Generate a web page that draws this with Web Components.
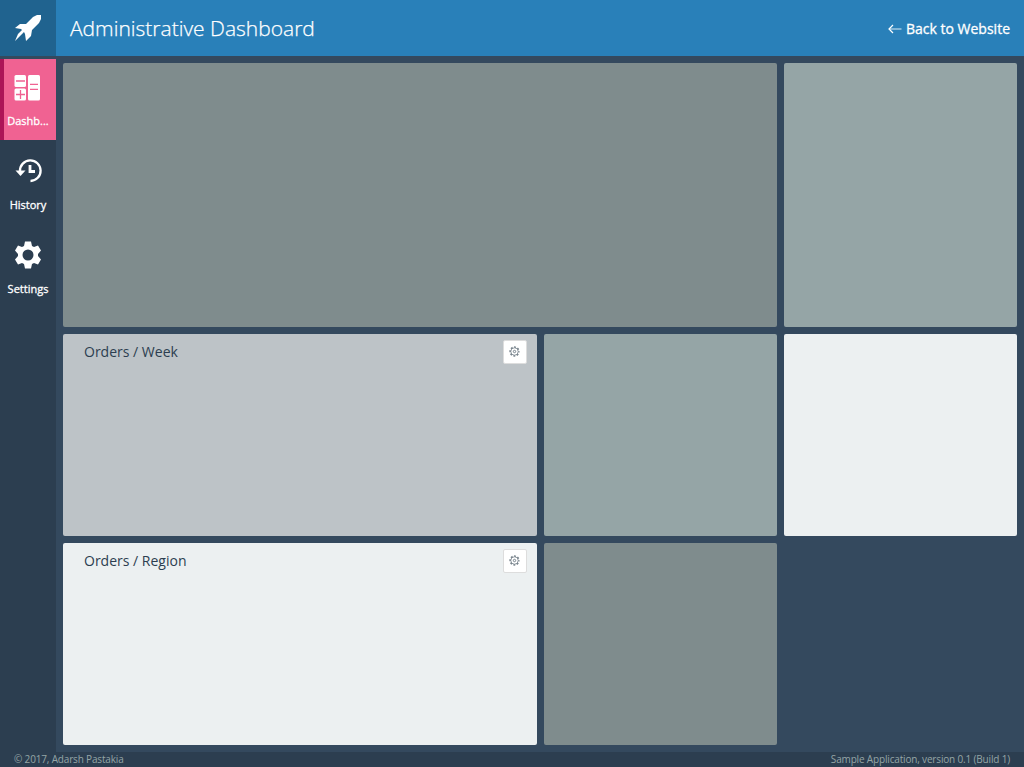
<!DOCTYPE html>
<html lang="en"><head><meta charset="utf-8"><title>Administrative Dashboard</title>
<style>html,body{margin:0;height:100%;overflow:hidden}body{font-family:"Open Sans",sans-serif;background:#34495e}</style></head>
<body><admin-app></admin-app>
<script>
const define=(name,html)=>customElements.define(name,class extends HTMLElement{
  constructor(){super();const t=document.createElement('template');t.innerHTML=html;
    this.attachShadow({mode:'open'}).append(t.content.cloneNode(true));}
});
define('app-header',`<style>
:host{display:flex;height:56px;background:#2980b9;color:#fff;align-items:center}
.logo{width:56px;height:56px;background:#20638f;flex:none}
svg{display:block}
h1{font-weight:300;font-size:21px;line-height:30px;margin:0 auto 0 14px;white-space:nowrap;-webkit-text-stroke:.25px #fff}
.back{display:flex;align-items:center;gap:4px;margin:2px 14px 0 0;font-size:14px;line-height:20px;font-weight:400;-webkit-text-stroke:.3px #fff}
</style><div class="logo"><svg width="56" height="56" viewBox="0 0 56 56"><path fill="#fff" d="M41 15 L41 19 L39 23 L32 30 L31 36 L26 41 L25 34 L24 32 L15 41 L18 34 L22 30 L21 29 L15 28 L20 24 L26 24 L33 17 L37 15Z"/></svg></div>
<h1><slot></slot></h1><div class="back"><svg width="14" height="14" viewBox="0 0 14 14" fill="none" stroke="#fff"><path d="M1 7H13.5" opacity=".85"/><path d="M5 3L1 7L5 11" stroke-width="1.2"/></svg><slot name="action"></slot></div>`);
define('nav-item',`<style>
:host{display:block;height:81px;margin-bottom:3px;box-sizing:border-box;border-left:4px solid transparent;color:#fff}
:host([active]){background:#f06292;border-color:#ad1457}
.icon{height:54px;margin-left:-4px}
.label{font-size:11px;line-height:16px;text-align:center;overflow:hidden;text-overflow:ellipsis;white-space:nowrap;margin-left:-4px;-webkit-text-stroke:.3px #fff}
</style><div class="icon"><slot name="icon"></slot></div><div class="label"><slot></slot></div>`);
define('side-nav',`<style>:host{display:block;background:#2c3e50;border-top:3px solid #34495e}svg{display:block}</style>
<nav-item active><svg slot="icon" width="56" height="54" viewBox="0 59 56 54"><g fill="#fff"><rect x="14.5" y="75" width="11.5" height="12" rx="1.5"/><rect x="14.5" y="88.500" width="11.5" height="12" rx="1.5"/><rect x="28" y="75" width="12" height="25.500" rx="1.5"/></g><path d="M16 81H25M16 94.500H25M20.500 90V99M30 84.300H38M30 89.300H38" stroke="#f06292" stroke-width="1.3"/></svg>Dashb...</nav-item>
<nav-item><svg slot="icon" width="56" height="54" viewBox="0 143 56 54"><path d="M20 171A10.300 10.300 0 1 1 30.500 181" fill="none" stroke="#fff" stroke-width="2.300"/><path d="M15.500 170.500H25.500L20.500 176Z" fill="#fff"/><path d="M30 165V171.500H35" fill="none" stroke="#fff" stroke-width="2.800"/></svg>History</nav-item>
<nav-item><svg slot="icon" width="56" height="54" viewBox="0 227 56 54"><path fill="#fff" fill-rule="evenodd" d="M25 241.500H31L32 246L34 247L38 245.500L41 250.500L38 254V256L41 259.500L38 264.500L34 263L32 264L31 268.500H25L24 264L22 263L18 264.500L15 259.500L18 256V254L15 250.500L18 245.500L22 247L24 246ZM28 249.500A5.500 5.500 0 1 0 28 260.500A5.500 5.500 0 1 0 28 249.500Z"/></svg>Settings</nav-item>`);
define('dash-panel',`<style>
:host{display:block;border-radius:2px;color:#2c3e50;min-width:0}
header{display:flex;justify-content:space-between;padding:6px 10px 0 21px;font-size:14px;line-height:24px}
button{box-sizing:border-box;width:24px;height:24px;border:1px solid #ddd;border-radius:2px;background:#fff;padding:0;display:grid;place-items:center}
:host(:not([titled])) header{display:none}
svg{display:block}
</style><header><slot></slot><button aria-label="Panel settings"><svg width="12" height="12" viewBox="0 0 12 12" fill="none" stroke="#77838c"><circle cx="5.500" cy="5.500" r="4.400" stroke-width="1.500" stroke-dasharray="1.900 1.556" stroke-dashoffset=".95"/><circle cx="5.500" cy="5.500" r="3.700" stroke-width=".8"/><circle cx="5.500" cy="5.500" r="1.200" stroke-width="1"/></svg></button></header>`);
define('dash-grid',`<style>
:host{display:grid;grid-template-columns:repeat(4,minmax(0,1fr));grid-template-rows:264px 202px 202px;gap:7px;padding:7px;box-sizing:border-box}
.w3{grid-column:span 3}.w2{grid-column:span 2}
.asbestos{background:#7f8c8d}.concrete{background:#95a5a6}.silver{background:#bdc3c7}.cloud{background:#ecf0f1}
</style><dash-panel class="w3 asbestos"></dash-panel><dash-panel class="concrete"></dash-panel>
<dash-panel titled class="w2 silver">Orders / Week</dash-panel><dash-panel class="concrete"></dash-panel><dash-panel class="cloud"></dash-panel>
<dash-panel titled class="w2 cloud">Orders / Region</dash-panel><dash-panel class="asbestos"></dash-panel>`);
define('app-footer',`<style>:host{display:flex;justify-content:space-between;height:15px;padding:0 14px;background:#2c3e50;color:#95a5a6;font-size:10px;line-height:15px;letter-spacing:-.165px}</style><slot></slot><slot name="version"></slot>`);
define('admin-app',`<style>:host{display:grid;height:767px;grid-template:56px 1fr 15px/56px 1fr;background:#34495e}
app-header,app-footer{grid-column:1/-1}</style>
<app-header>Administrative Dashboard<span slot="action">Back to Website</span></app-header><side-nav></side-nav><dash-grid></dash-grid>
<app-footer><span>© 2017, Adarsh Pastakia</span><span slot="version">Sample Application, version 0.1 (Build 1)</span></app-footer>`);
</script></body></html>
